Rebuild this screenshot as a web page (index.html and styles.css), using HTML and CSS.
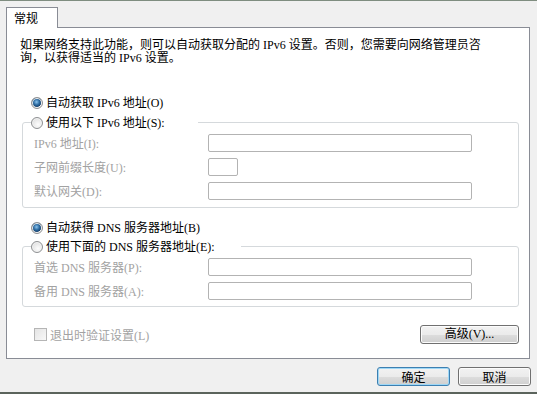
FILE: index.html
```html
<!DOCTYPE html>
<html lang="zh-CN">
<head>
    <meta charset="UTF-8">
    <title>Internet 协议版本 6 (TCP/IPv6) 属性</title>
    <link rel="stylesheet" href="styles.css">
</head>
<body>
    <div class="tabs">
        <div class="tab">常规</div>
    </div>
    <div class="panel">
        <p class="intro">如果网络支持此功能，则可以自动获取分配的 IPv6 设置。否则，您需要向网络管理员咨<br>询，以获得适当的 IPv6 设置。</p>

        <label class="option"><span class="radio checked"></span>自动获取 IPv6 地址(O)</label>
        <div class="group">
            <label class="option legend legend-ip"><span class="radio"></span>使用以下 IPv6 地址(S):</label>
            <div class="field"><span class="field-label">IPv6 地址(I):</span><span class="textbox"></span></div>
            <div class="field"><span class="field-label">子网前缀长度(U):</span><span class="textbox short"></span></div>
            <div class="field"><span class="field-label">默认网关(D):</span><span class="textbox"></span></div>
        </div>

        <label class="option option-dns"><span class="radio checked"></span>自动获得 DNS 服务器地址(B)</label>
        <div class="group group-dns">
            <label class="option legend legend-dns"><span class="radio"></span>使用下面的 DNS 服务器地址(E):</label>
            <div class="field"><span class="field-label">首选 DNS 服务器(P):</span><span class="textbox"></span></div>
            <div class="field"><span class="field-label">备用 DNS 服务器(A):</span><span class="textbox"></span></div>
        </div>

        <div class="footer">
            <label class="check"><span class="checkbox"></span>退出时验证设置(L)</label>
            <button class="btn btn-advanced">高级(V)...</button>
        </div>
    </div>
    <div class="actions">
        <button class="btn btn-default">确定</button>
        <button class="btn">取消</button>
    </div>
</body>
</html>
```
FILE: styles.css
```css
:root {
    --window-bg: #f0f0f0;
    --panel-border: #898c95;
    --group-border: #d5d9dc;
    --disabled-text: #a2a2a2;
    --box-border: #b3b3b3;
}
html, body {
    margin: 0;
    padding: 0;
}
body {
    width: 537px;
    height: 394px;
    box-sizing: border-box;
    overflow: hidden;
    background-color: var(--window-bg);
    border-top: 1px solid #7f8d80;
    border-bottom: 2px solid #5b645c;
    font-family: "Liberation Serif", "Noto Sans CJK SC", serif;
    font-size: 12px;
    color: #000;
}
.tabs {
    display: flex;
    padding: 6px 0 0 6px;
}
.tab {
    position: relative;
    z-index: 1;
    width: 52px;
    height: 21px;
    box-sizing: border-box;
    margin-bottom: -1px;
    padding: 2px 0 0 7px;
    background-color: #fff;
    border: 1px solid var(--panel-border);
    border-bottom: none;
    font-family: "Noto Sans CJK SC", sans-serif;
    line-height: 16px;
}
.panel {
    width: 524px;
    height: 332px;
    box-sizing: border-box;
    margin-left: 6px;
    padding: 11px 0 0 13px;
    background-color: #fff;
    border: 1px solid var(--panel-border);
}
.intro {
    margin: 0;
    line-height: 13px;
}
.option {
    display: flex;
    align-items: center;
    height: 16px;
    margin: 30px 0 0 11px;
    line-height: 16px;
    white-space: nowrap;
}
.option-dns {
    margin-top: 12px;
}
.radio {
    width: 12px;
    height: 12px;
    box-sizing: border-box;
    margin-right: 3px;
    border: 1px solid #8e9092;
    border-radius: 50%;
    background: radial-gradient(circle at 60% 65%, #fdfdfd 0%, #e6e6e6 60%, #d2d2d2 100%);
    box-shadow: inset 0 0 0 1px #f4f4f4;
    flex-shrink: 0;
}
.radio.checked {
    background:
        radial-gradient(circle at 45% 40%, #8bc4ee 0%, #2d6ca2 35%, #153f6b 60%, transparent 62%),
        radial-gradient(circle, #fdfdfd 0%, #dcdcdc 100%);
}
.group {
    margin: 11px 10px 0 2px;
    padding: 0 0 7px 11px;
    border: 1px solid var(--group-border);
    border-radius: 3px;
}
.group-dns {
    margin-top: 10px;
    padding-bottom: 6px;
}
.legend {
    margin: -8px 0 0 -3px;
    background-color: #fff;
}
.legend-ip {
    width: 167px;
}
.legend-dns {
    width: 210px;
}
.field {
    display: flex;
    align-items: center;
    height: 18px;
    margin-top: 6px;
    color: var(--disabled-text);
}
.legend + .field {
    margin-top: 3px;
}
.field-label {
    width: 174px;
    flex-shrink: 0;
}
.textbox {
    width: 264px;
    height: 18px;
    box-sizing: border-box;
    background-color: #fff;
    border: 1px solid var(--box-border);
    border-radius: 2px;
}
.textbox.short {
    width: 30px;
}
.footer {
    display: flex;
    align-items: center;
    justify-content: space-between;
    height: 19px;
    margin: 18px 10px 0 14px;
}
.check {
    display: flex;
    align-items: center;
    color: var(--disabled-text);
}
.checkbox {
    width: 13px;
    height: 13px;
    box-sizing: border-box;
    margin-right: 3px;
    border: 1px solid #b5b5b5;
    background: linear-gradient(135deg, #e4e4e4, #f8f8f8);
}
.btn {
    width: 73px;
    height: 19px;
    padding: 0;
    border: 1px solid #707070;
    border-radius: 3px;
    background: linear-gradient(#f2f2f2 0%, #ebebeb 50%, #dddddd 51%, #cfcfcf 100%);
    box-shadow: inset 0 0 0 1px #fcfcfc;
    font-family: "Noto Sans CJK SC", sans-serif;
    font-size: 12px;
    line-height: 17px;
    color: #000;
}
.btn-advanced {
    width: 99px;
    font-family: "Liberation Serif", "Noto Sans CJK SC", serif;
}
.btn-default {
    border-color: #3c7fb1;
    box-shadow: inset 0 0 0 1px #9ed7f6;
}
.actions {
    display: flex;
    justify-content: flex-end;
    gap: 8px;
    margin-top: 8px;
    padding-right: 6px;
}
```
